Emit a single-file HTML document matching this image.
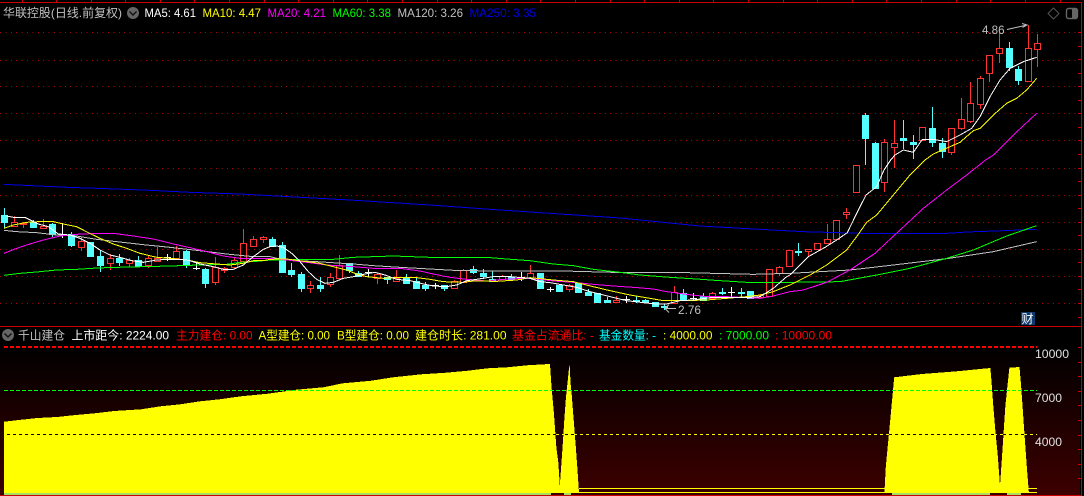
<!DOCTYPE html>
<html><head><meta charset="utf-8"><style>
html,body{margin:0;padding:0;background:#000;width:1084px;height:496px;overflow:hidden}
svg{display:block}
text{font-family:"Liberation Sans","Noto Sans CJK SC",sans-serif;font-size:12px}
</style></head><body>
<svg xmlns="http://www.w3.org/2000/svg" width="1084" height="496" viewBox="0 0 1084 496">
<defs><linearGradient id="g" x1="0" y1="0" x2="0" y2="1"><stop offset="0" stop-color="#000"/><stop offset="1" stop-color="#3c0000"/></linearGradient></defs>
<rect width="1084" height="496" fill="#000"/>
<rect x="0" y="345" width="1080" height="150" fill="url(#g)"/>

<g stroke="#b40000" stroke-dasharray="1 4.4" shape-rendering="crispEdges">
<line x1="0" x2="1078" y1="32.5" y2="32.5"/><line x1="0" x2="1078" y1="60.5" y2="60.5"/><line x1="0" x2="1078" y1="86.5" y2="86.5"/><line x1="0" x2="1078" y1="113.5" y2="113.5"/><line x1="0" x2="1078" y1="140.5" y2="140.5"/><line x1="0" x2="1078" y1="168.5" y2="168.5"/><line x1="0" x2="1078" y1="195.5" y2="195.5"/><line x1="0" x2="1078" y1="222.5" y2="222.5"/><line x1="0" x2="1078" y1="249.5" y2="249.5"/><line x1="0" x2="1078" y1="276.5" y2="276.5"/><line x1="0" x2="1078" y1="303.5" y2="303.5"/>
</g>

<g shape-rendering="crispEdges">
<path d="M579 488.5H1037M579 492.5H1037" stroke="#ff0" fill="none"/>
<polygon fill="#ff0" points="4,493 3.9,421.7 18.9,420 37.5,418 57,417 75.7,415 94.6,413.3 114.3,411 141,409.3 160.7,406.3 180.4,404.3 200,401.3 219.6,399.3 241,396.3 267.9,393.7 296.4,389.7 323.2,387.3 342.9,383.3 371.4,380.7 392.9,377.3 421.4,374.3 446.4,372.7 467.9,370.7 487.5,368.3 507,367.3 526.8,365.3 549.3,364 550,364 551.5,386.7 553.9,413.3 556.3,446.7 558.4,463.3 559.8,485.7 562.6,446.7 564.3,420 566,396.7 568.5,373.3 569.5,362.7 570.6,383.3 571.9,396.7 573.7,420 575.8,446.7 577.5,470 579,493"/>
<polygon fill="#ff0" points="884.4,493 885.8,466.7 889.3,430 892.1,400 894.2,377.3 921.9,374 956.7,371.3 990.4,368 991.4,380 993.1,403.3 995.6,433.3 997.6,453.3 1000,485.7 1001.8,460 1005.3,406.7 1007,390 1009.4,367.7 1019.5,367 1020.9,383.3 1022.6,406.7 1024.4,433.3 1026.8,466.7 1028.9,493"/>
<path d="M4 494H551M564 494H571M892 494H990M1007 494H1021" stroke="#a4e060" stroke-width="2" fill="none"/>
<line x1="4" x2="1037" y1="347" y2="347" stroke="#f00" stroke-width="2" stroke-dasharray="4 2"/>
<line x1="4" x2="1037" y1="390.5" y2="390.5" stroke="#0f0" stroke-dasharray="4 2"/>
<line x1="7" x2="1037" y1="434.5" y2="434.5" stroke="#000" stroke-dasharray="3 3"/>
<line x1="10" x2="1037" y1="434.5" y2="434.5" stroke="#ff0" stroke-dasharray="3 3"/>

<path fill="#000" stroke="#ff3232" d="M11.5 222.5h6V226.5h-6zM14.5 216V222M20.5 223.5h6V224.5h-6zM23.5 222V223M23.5 225V228M40.5 226.5h6V228.5h-6zM43.5 219V226M78.5 241.5h6V247.5h-6zM81.5 237V241M81.5 248V251M107.5 258.5h6V263.5h-6zM110.5 254V258M110.5 264V270M126.5 260.5h6V263.5h-6zM129.5 258V260M129.5 264V267M145.5 258.5h6V265.5h-6zM148.5 255V258M148.5 266V268M154.5 258.5h6V261.5h-6zM157.5 247V258M173.5 251.5h6V258.5h-6zM176.5 246V251M212.5 267.5h6V282.5h-6zM215.5 257V267M215.5 283V285M221.5 268.5h6V270.5h-6zM224.5 267V268M224.5 271V273M231.5 260.5h6V267.5h-6zM234.5 257V260M240.5 243.5h6V261.5h-6zM243.5 229V243M250.5 239.5h6V246.5h-6zM253.5 236V239M260.5 237.5h6V239.5h-6zM263.5 236V237M263.5 240V243M307.5 285.5h6V288.5h-6zM310.5 281V285M310.5 289V293M327.5 277.5h6V284.5h-6zM330.5 273V277M330.5 285V287M336.5 265.5h6V278.5h-6zM339.5 255V265M374.5 274.5h6V278.5h-6zM377.5 273V274M377.5 279V284M393.5 278.5h6V281.5h-6zM396.5 270V278M451.5 281.5h6V288.5h-6zM454.5 280V281M460.5 270.5h6V282.5h-6zM463.5 269V270M499.5 276.5h6V279.5h-6zM502.5 275V276M527.5 273.5h6V278.5h-6zM530.5 265V273M566.5 285.5h6V289.5h-6zM569.5 284V285M569.5 290V292M613.5 300.5h6V302.5h-6zM616.5 296V300M671.5 292.5h6V303.5h-6zM674.5 286V292M709.5 293.5h6V298.5h-6zM712.5 292V293M757.5 295.5h6V297.5h-6zM760.5 294V295M766.5 269.5h6V296.5h-6zM776.5 267.5h6V273.5h-6zM779.5 266V267M779.5 274V276M786.5 250.5h6V266.5h-6zM805.5 249.5h6V251.5h-6zM808.5 252V257M814.5 243.5h6V249.5h-6zM824.5 239.5h6V243.5h-6zM827.5 224V239M833.5 220.5h6V239.5h-6zM843.5 212.5h6V214.5h-6zM846.5 208V212M846.5 215V219M853.5 165.5h6V192.5h-6zM881.5 142.5h6V182.5h-6zM884.5 139V142M884.5 183V192M891.5 143.5h6V147.5h-6zM894.5 120V143M894.5 148V168M919.5 127.5h6V140.5h-6zM948.5 128.5h6V152.5h-6zM951.5 153V155M958.5 119.5h6V128.5h-6zM961.5 98V119M961.5 129V130M967.5 103.5h6V121.5h-6zM970.5 82V103M970.5 122V123M977.5 78.5h6V104.5h-6zM980.5 76V78M980.5 105V109M986.5 55.5h6V73.5h-6zM989.5 74V82M996.5 48.5h6V53.5h-6zM999.5 33V48M999.5 54V63M1025.5 48.5h6V81.5h-6zM1028.5 25V48M1034.5 43.5h6V49.5h-6zM1037.5 34V43M1037.5 50V67"/>

<path fill="#54ffff" stroke="#54ffff" d="M1.5 215.5h6V222.5h-6zM4.5 208V215M4.5 223V228M30.5 222.5h6V227.5h-6zM33.5 220V222M49.5 224.5h6V234.5h-6zM52.5 223V224M52.5 235V237M68.5 234.5h6V245.5h-6zM71.5 232V234M71.5 246V247M87.5 242.5h6V256.5h-6zM97.5 256.5h6V265.5h-6zM100.5 250V256M100.5 266V272M116.5 258.5h6V262.5h-6zM119.5 254V258M119.5 263V266M135.5 260.5h6V266.5h-6zM138.5 256V260M183.5 251.5h6V265.5h-6zM186.5 250V251M186.5 266V268M202.5 269.5h6V283.5h-6zM205.5 268V269M205.5 284V288M269.5 239.5h6V246.5h-6zM272.5 237V239M279.5 245.5h6V272.5h-6zM282.5 242V245M288.5 270.5h6V274.5h-6zM291.5 263V270M291.5 275V277M298.5 274.5h6V288.5h-6zM301.5 272V274M301.5 289V292M317.5 285.5h6V288.5h-6zM320.5 277V285M320.5 289V292M346.5 263.5h6V270.5h-6zM349.5 271V273M355.5 273.5h6V276.5h-6zM358.5 271V273M384.5 277.5h6V279.5h-6zM387.5 280V284M403.5 278.5h6V283.5h-6zM406.5 274V278M413.5 281.5h6V288.5h-6zM416.5 277V281M422.5 285.5h6V288.5h-6zM425.5 282V285M425.5 289V291M441.5 285.5h6V288.5h-6zM444.5 289V291M470.5 269.5h6V272.5h-6zM473.5 266V269M473.5 273V274M480.5 273.5h6V276.5h-6zM483.5 269V273M483.5 277V279M489.5 279.5h6V281.5h-6zM492.5 271V279M508.5 277.5h6V279.5h-6zM511.5 274V277M511.5 280V281M537.5 273.5h6V288.5h-6zM556.5 285.5h6V291.5h-6zM575.5 283.5h6V292.5h-6zM585.5 292.5h6V295.5h-6zM588.5 289V292M594.5 293.5h6V302.5h-6zM604.5 300.5h6V302.5h-6zM607.5 297V300M633.5 300.5h6V301.5h-6zM636.5 296V300M636.5 302V303M642.5 300.5h6V302.5h-6zM645.5 299V300M652.5 302.5h6V306.5h-6zM661.5 306.5h6V307.5h-6zM664.5 304V306M664.5 308V310M680.5 293.5h6V299.5h-6zM683.5 289V293M700.5 296.5h6V300.5h-6zM703.5 293V296M719.5 292.5h6V293.5h-6zM722.5 288V292M722.5 294V295M738.5 292.5h6V293.5h-6zM741.5 288V292M741.5 294V298M747.5 291.5h6V298.5h-6zM795.5 251.5h6V252.5h-6zM798.5 243V251M798.5 253V256M862.5 115.5h6V138.5h-6zM865.5 113V115M865.5 139V165M872.5 143.5h6V188.5h-6zM875.5 142V143M900.5 138.5h6V140.5h-6zM903.5 120V138M903.5 141V149M910.5 142.5h6V144.5h-6zM913.5 135V142M913.5 145V159M929.5 128.5h6V142.5h-6zM932.5 107V128M932.5 143V147M939.5 143.5h6V151.5h-6zM942.5 138V143M942.5 152V158M1006.5 48.5h6V67.5h-6zM1009.5 42V48M1009.5 68V71M1015.5 69.5h6V80.5h-6zM1018.5 66V69M1018.5 81V85"/>

<path fill="none" stroke="#fff" d="M59 234.5h7M62.5 223V238M164 257.5h7M167.5 254V261M193 268.5h7M196.5 262V270M365 272.5h7M368.5 269V277M432 285.5h7M435.5 283V289M518 277.5h7M521.5 272V281M547 289.5h7M550.5 287V292M623 299.5h7M626.5 296V303M690 298.5h7M693.5 293V301M728 292.5h7M731.5 287V298"/>

<g fill="none" stroke-width="3">
<g transform="translate(0 170) scale(.33333)">
<polyline stroke="#0000e6" points="12,43 115,48 200,52 290,55 430,60 570,67 720,72 810,77"/>
<polyline stroke="#c0c0c0" points="12,181 50,185 110,188 170,195 230,198 290,208 350,215 430,224 510,232 590,241 680,252 750,259 810,260"/>
<polyline stroke="#0f0" points="12,316 60,310 110,306 170,300 230,298 290,294 350,292 430,290 510,288 600,285 680,283 720,277 770,274 810,270"/>
<polyline stroke="#f0f" points="12,250 50,235 90,222 130,210 180,198 230,193 290,190 340,190 400,198 460,207 520,222 570,233 620,245 670,258 720,265 780,265 810,265"/>
<polyline stroke="#ff0" points="12,175 40,165 80,157 115,155 160,155 190,162 230,170 265,188 300,205 340,222 380,235 420,250 470,262 510,265 560,270 600,278 650,282 690,285 730,280 760,272 790,272 810,268"/>
<polyline stroke="#fff" points="20,138 40,142 75,142 115,162 145,170 175,192 210,195 240,205 270,220 300,240 330,255 360,262 395,272 430,277 470,270 500,268 540,268 570,272 600,282 640,290 670,298 700,298 730,285 760,260 790,238 810,230"/>
</g>
<g transform="translate(260 220) scale(.33333)">
<polyline stroke="#0000e6" points="30,-73 270,-60 510,-45 720,-30 810,-24"/>
<polyline stroke="#c0c0c0" points="30,110 50,115 110,122 170,125 280,132 340,137 420,142 510,147 600,152 810,153"/>
<polyline stroke="#0f0" points="30,120 220,118 280,112 400,108 510,112 680,112 740,117 810,122"/>
<polyline stroke="#f0f" points="30,115 80,120 140,127 200,135 280,140 340,145 420,145 480,153 520,162 570,172 620,178 680,183 730,178 790,175 810,175"/>
<polyline stroke="#ff0" points="30,118 80,117 140,125 180,130 220,140 260,150 290,162 320,170 370,175 420,172 470,173 510,178 550,185 610,187 640,183 710,184 770,180 810,173"/>
<polyline stroke="#fff" points="30,80 50,78 70,82 95,100 120,125 145,155 170,178 195,190 220,187 250,175 280,170 310,163 345,157 375,165 410,178 450,182 490,192 520,198 560,200 590,195 620,182 650,178 700,170 750,170 810,175"/>
</g>
<g transform="translate(520 230) scale(.33333)">
<polyline stroke="#0000e6" points="30,-54 300,-36 540,-12 810,3"/>
<polyline stroke="#c0c0c0" points="30,123 130,123 280,127 500,128 700,133 810,130"/>
<polyline stroke="#0f0" points="30,92 50,95 100,102 160,107 220,118 300,127 360,135 450,142 530,147 600,152 680,157 810,157"/>
<polyline stroke="#f0f" points="30,145 50,147 100,153 160,157 220,163 280,168 340,172 400,177 440,185 500,193 560,200 620,200 680,203 720,205 760,198 810,185"/>
<polyline stroke="#ff0" points="30,143 50,145 100,150 160,155 220,170 270,182 330,195 390,205 430,212 490,212 560,210 620,205 680,200 720,195 760,185 810,165"/>
<polyline stroke="#fff" points="30,145 60,155 90,158 130,165 170,172 210,185 250,195 290,205 320,212 370,218 410,222 440,222 480,212 520,210 570,203 620,203 680,203 720,200 760,175 800,140 810,135"/>
</g>
<g transform="translate(760 160) scale(.33333)">
<polyline stroke="#0000e6" points="90,213 130,215 300,220 560,220 620,216 730,212 830,208"/>
<polyline stroke="#c0c0c0" points="90,340 270,330 400,315 560,296 700,275 830,245"/>
<polyline stroke="#0f0" points="90,367 240,365 350,345 450,325 560,295 640,270 740,228 830,197"/>
<polyline stroke="#f0f" points="90,395 130,390 200,367 270,330 345,280 420,210 490,145 560,90 620,45 677,0"/>
<polyline stroke="#ff0" points="90,375 100,370 150,345 200,315 260,270 290,230 320,187 350,165 400,105 450,45 495,0"/>
<polyline stroke="#fff" points="90,345 100,335 145,290 195,262 230,240 262,218 290,160 318,105 350,80 372,30 392,0"/>
</g>
<g transform="translate(760 0) scale(.33333)">
<polyline stroke="#f0f" points="677,480 700,465 760,405 830,340"/>
<polyline stroke="#ff0" points="495,480 520,462 600,427 640,392 660,385 700,345 740,310 770,295 800,270 830,235"/>
<polyline stroke="#fff" points="392,480 405,465 430,450 460,457 487,418 520,418 560,425 600,405 635,385 660,350 690,290 720,240 750,205 790,185 830,172"/>
</g>
</g>

<path fill="none" stroke="#c80000" d="M0 2.5H1082M0 326.5H1082M0 495.5H1082M1081.5 2V496M22.5 0V3M56.5 0V3M91.5 0V3M125.5 0V3M160.5 0V3M194.5 0V3M229.5 0V3M264.5 0V3M298.5 0V3M333.5 0V3M367.5 0V3M402.5 0V3M437.5 0V3M471.5 0V3M506.5 0V3M540.5 0V3M575.5 0V3M610.5 0V3M644.5 0V3M679.5 0V3M713.5 0V3M748.5 0V3M783.5 0V3M817.5 0V3M852.5 0V3M886.5 0V3M921.5 0V3M956.5 0V3M990.5 0V3M1025.5 0V3M1060.5 0V3M1078 32.5H1082M1078 46.5H1082M1078 59.5H1082M1078 73.5H1082M1078 86.5H1082M1078 100.5H1082M1078 113.5H1082M1078 127.5H1082M1078 140.5H1082M1078 154.5H1082M1078 168.5H1082M1078 181.5H1082M1078 195.5H1082M1078 208.5H1082M1078 222.5H1082M1078 235.5H1082M1078 249.5H1082M1078 262.5H1082M1078 276.5H1082M1078 289.5H1082M1078 303.5H1082M1078 317.5H1082M1078 347.5H1082M1078 362.5H1082M1078 376.5H1082M1078 391.5H1082M1078 405.5H1082M1078 420.5H1082M1078 435.5H1082M1078 449.5H1082M1078 464.5H1082M1078 478.5H1082"/>
</g>

<circle cx="133" cy="13" r="6" fill="#666"/><path d="M129.5 11.5l3.5 3.5 3.5-3.5" fill="none" stroke="#111" stroke-width="1.4"/>
<circle cx="8" cy="335" r="6" fill="#666"/><path d="M4.5 333.5l3.5 3.5 3.5-3.5" fill="none" stroke="#111" stroke-width="1.4"/>
<path d="M1053.5 8l5.5 5.5-5.5 5.5-5.5-5.5z" fill="none" stroke="#555"/>
<rect x="1066.5" y="8.5" width="11" height="10" rx="2" fill="none" stroke="#666" stroke-width="1.4"/><rect x="1072" y="9" width="5" height="9" fill="#666"/>

<text x="3" y="17" fill="#c0c0c0" font-size="13" textLength="119" lengthAdjust="spacingAndGlyphs">华联控股(日线.前复权)</text>
<text x="144.5" y="17" fill="#fff" textLength="51.5" lengthAdjust="spacingAndGlyphs">MA5: 4.61</text>
<text x="202.5" y="17" fill="#ff0" textLength="58.5" lengthAdjust="spacingAndGlyphs">MA10: 4.47</text>
<text x="267.5" y="17" fill="#f0f" textLength="58.5" lengthAdjust="spacingAndGlyphs">MA20: 4.21</text>
<text x="332.5" y="17" fill="#0f0" textLength="58.5" lengthAdjust="spacingAndGlyphs">MA60: 3.38</text>
<text x="397.5" y="17" fill="#c0c0c0" textLength="65.5" lengthAdjust="spacingAndGlyphs">MA120: 3.26</text>
<text x="469.5" y="17" fill="#0000e6" textLength="66.5" lengthAdjust="spacingAndGlyphs">MA250: 3.35</text>

<text x="982" y="34" fill="#c0c0c0" textLength="22.5" lengthAdjust="spacingAndGlyphs">4.86</text>
<path d="M1007 29.5L1027 25M1022 23.5L1027 25 1022.5 27.5" fill="none" stroke="#c0c0c0"/>
<text x="678" y="314" fill="#c0c0c0" textLength="23" lengthAdjust="spacingAndGlyphs">2.76</text>
<path d="M676 308.5H665M669 304.5L665 308.5 669 312.5" fill="none" stroke="#c0c0c0"/>

<rect x="1021" y="312" width="14" height="13" fill="#0f3a6e"/>
<text x="1021.5" y="323" fill="#fff" font-size="13">财</text>

<text x="18" y="339.5" fill="#c0c0c0" font-size="13" textLength="47" lengthAdjust="spacingAndGlyphs">千山建仓</text>
<text x="71.5" y="339.5" fill="#fff" font-size="13" textLength="97.5" lengthAdjust="spacingAndGlyphs">上市距今: 2224.00</text>
<text x="176" y="339.5" fill="#f00" font-size="13" textLength="76.5" lengthAdjust="spacingAndGlyphs">主力建仓: 0.00</text>
<text x="258.5" y="339.5" fill="#ff0" font-size="13" textLength="71.5" lengthAdjust="spacingAndGlyphs">A型建仓: 0.00</text>
<text x="337" y="339.5" fill="#ff0" font-size="13" textLength="72" lengthAdjust="spacingAndGlyphs">B型建仓: 0.00</text>
<text x="415" y="339.5" fill="#ff0" font-size="13" textLength="91.5" lengthAdjust="spacingAndGlyphs">建仓时长: 281.00</text>
<text x="512" y="339.5" fill="#f00" font-size="13" textLength="82" lengthAdjust="spacingAndGlyphs">基金占流通比: -</text>
<text x="599" y="339.5" fill="#0ff" font-size="13" textLength="57" lengthAdjust="spacingAndGlyphs">基金数量: -</text>
<text x="663" y="339.5" fill="#ff0" textLength="49.5" lengthAdjust="spacingAndGlyphs">: 4000.00</text>
<text x="719" y="339.5" fill="#0f0" textLength="50" lengthAdjust="spacingAndGlyphs">: 7000.00</text>
<text x="775" y="339.5" fill="#f00" textLength="57" lengthAdjust="spacingAndGlyphs">: 10000.00</text>

<text x="1035" y="358" fill="#e0e0e0" textLength="34" lengthAdjust="spacingAndGlyphs">10000</text>
<text x="1035" y="402" fill="#e0e0e0" textLength="27" lengthAdjust="spacingAndGlyphs">7000</text>
<text x="1035" y="446" fill="#e0e0e0" textLength="27" lengthAdjust="spacingAndGlyphs">4000</text>
</svg>
</body></html>
